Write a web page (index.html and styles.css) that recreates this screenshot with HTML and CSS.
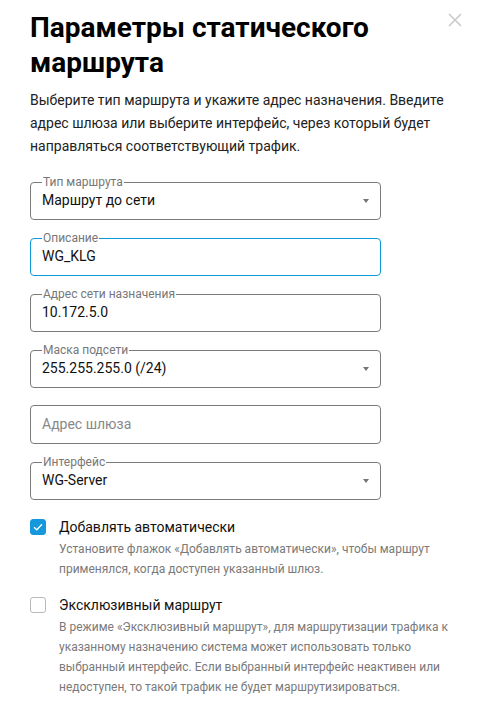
FILE: index.html
```html
<!DOCTYPE html>
<html lang="ru">
<head>
  <meta charset="UTF-8" />
  <meta name="viewport" content="width=device-width, initial-scale=1.0"/>
  <title>Параметры статического маршрута</title>
  <link rel="stylesheet" href="styles.css">
</head>
<body>
  <div class="dialog">
    <div class="dialog-head">
      <h1>Параметры статического маршрута</h1>
      <button class="close" type="button" aria-label="Закрыть">
        <svg width="14" height="14" viewBox="0 0 14 14">
          <path d="M1 1L13 13M13 1L1 13" stroke="#c9c9c9" stroke-width="1.6" fill="none"/>
        </svg>
      </button>
    </div>

    <p class="intro">Выберите тип маршрута и укажите адрес назначения. Введите адрес шлюза или выберите интерфейс, через который будет направляться соответствующий трафик.</p>

    <div class="fields">
      <fieldset class="field">
        <legend>Тип маршрута</legend>
        <div class="value">
          <span>Маршрут до сети</span>
          <i class="arrow"></i>
        </div>
      </fieldset>

      <fieldset class="field field-focus">
        <legend>Описание</legend>
        <div class="value"><span>WG_KLG</span></div>
      </fieldset>

      <fieldset class="field">
        <legend>Адрес сети назначения</legend>
        <div class="value"><span>10.172.5.0</span></div>
      </fieldset>

      <fieldset class="field">
        <legend>Маска подсети</legend>
        <div class="value">
          <span>255.255.255.0 (/24)</span>
          <i class="arrow"></i>
        </div>
      </fieldset>

      <fieldset class="field field-plain">
        <div class="value placeholder"><span>Адрес шлюза</span></div>
      </fieldset>

      <fieldset class="field">
        <legend>Интерфейс</legend>
        <div class="value">
          <span>WG-Server</span>
          <i class="arrow"></i>
        </div>
      </fieldset>
    </div>

    <div class="option">
      <span class="box checked">
        <svg width="10" height="8" viewBox="0 0 10 8">
          <path d="M1 4.2L3.8 6.8L9 1.2" stroke="#fff" stroke-width="1.3" fill="none"/>
        </svg>
      </span>
      <div class="option-text">
        <div class="option-title">Добавлять автоматически</div>
        <div class="option-hint">Установите флажок «Добавлять автоматически», чтобы маршрут применялся, когда доступен указанный шлюз.</div>
      </div>
    </div>

    <div class="option">
      <span class="box"></span>
      <div class="option-text">
        <div class="option-title">Эксклюзивный маршрут</div>
        <div class="option-hint">В режиме «Эксклюзивный маршрут», для маршрутизации трафика к указанному назначению система может использовать только выбранный интерфейс. Если выбранный интерфейс неактивен или недоступен, то такой трафик не будет маршрутизироваться.</div>
      </div>
    </div>
  </div>
</body>
</html>
```

FILE: styles.css
```css
* {
  box-sizing: border-box;
}

body {
  margin: 0;
  background: #fff;
  font-family: Roboto, "Liberation Sans", sans-serif;
  color: #111;
}

.dialog {
  padding: 10px 29px 20px 30px;
}

.dialog-head {
  display: flex;
  justify-content: space-between;
  align-items: flex-start;
}

h1 {
  margin: 0;
  font-size: 28px;
  line-height: 35px;
  font-weight: 700;
  color: #000;
}

.close {
  border: none;
  background: none;
  padding: 0;
  margin-top: 3px;
  width: 14px;
  height: 14px;
  cursor: pointer;
}

.close svg {
  display: block;
}

.intro {
  margin: 9px 0 0;
  font-size: 14px;
  line-height: 23px;
  color: #222;
}

.fields {
  display: flex;
  flex-direction: column;
  gap: 11px;
  width: 351px;
  margin-top: 17px;
}

.field {
  margin: 0;
  padding: 0 11px 8px;
  border: 1px solid #7b7b7b;
  border-radius: 4px;
  min-width: 0;
}

.field legend {
  padding: 0 1px;
  margin-left: 0;
  font-size: 12px;
  line-height: 14px;
  color: #777;
}

.field-focus {
  border-color: #0d9ad8;
}

.field-plain {
  margin-top: 6px;
  padding-top: 8px;
}

.value {
  display: flex;
  justify-content: space-between;
  align-items: center;
  margin-top: 1px;
  font-size: 14px;
  line-height: 21px;
  color: #111;
}

.field-plain .value {
  margin-top: 0;
}

.placeholder {
  color: #888;
}

.arrow {
  display: block;
  width: 0;
  height: 0;
  border-left: 3.5px solid transparent;
  border-right: 3.5px solid transparent;
  border-top: 4px solid #757575;
}

.option {
  display: flex;
  gap: 13px;
  margin-top: 17px;
}

.option + .option {
  margin-top: 16px;
}

.box {
  flex: none;
  display: flex;
  align-items: center;
  justify-content: center;
  width: 16px;
  height: 16px;
  margin-top: 2px;
  border: 1px solid #b8b8b8;
  border-radius: 3px;
  background: #fff;
}

.box.checked {
  background: #1598dc;
  border-color: #1598dc;
}

.option-title {
  font-size: 14px;
  line-height: 20px;
  color: #111;
}

.option-hint {
  margin-top: 2px;
  font-size: 12px;
  line-height: 20px;
  color: #7a7a7a;
}
```
